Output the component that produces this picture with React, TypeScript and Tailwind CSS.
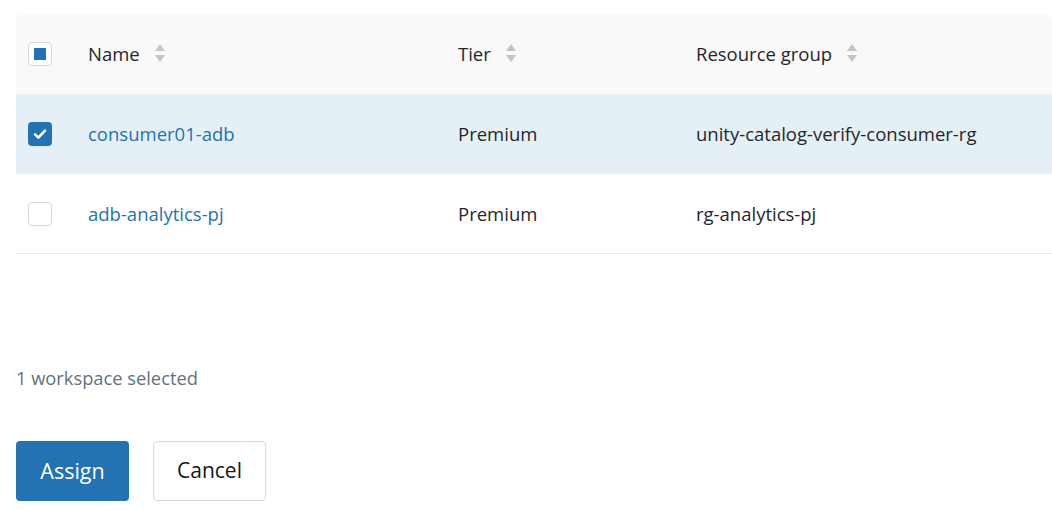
import React from 'react';

const rows = [
  { name: 'consumer01-adb', tier: 'Premium', group: 'unity-catalog-verify-consumer-rg', selected: true },
  { name: 'adb-analytics-pj', tier: 'Premium', group: 'rg-analytics-pj', selected: false }
];

function SortIcon() {
  return (
    <svg width="12" height="22" viewBox="0 0 12 22" className="ml-[14px] shrink-0">
      <path d="M6 1 L11 8 L1 8 Z" fill="#c4c4c4" />
      <path d="M1 12 L11 12 L6 19 Z" fill="#c4c4c4" />
    </svg>
  );
}

function Checkbox({ state }: { state: 'checked' | 'indeterminate' | 'empty' }) {
  if (state === 'checked') {
    return (
      <div className="w-6 h-6 rounded-[4px] bg-[#2272b4] flex items-center justify-center">
        <svg width="16" height="16" viewBox="0 0 16 16">
          <path d="M3 8.4 L6.4 11.6 L13 4.6" fill="none" stroke="white" strokeWidth="2.6" strokeLinecap="round" strokeLinejoin="round" />
        </svg>
      </div>
    );
  }
  return (
    <div className="w-6 h-6 rounded-[4px] border border-[#d1d9e1] bg-white flex items-center justify-center">
      {state === 'indeterminate' && <div className="w-3 h-3 bg-[#2272b4]" />}
    </div>
  );
}

export default function App() {
  return (
    <div className="bg-white pl-4 pt-[14px] min-h-[510px] text-[#11171c]" style={{ fontFamily: '"Open Sans", sans-serif' }}>
      <div className="w-full">
        <div className="grid grid-cols-[56px_370px_238px_1fr] h-[80px] bg-[#f9f9f9] rounded-t-md items-center text-[18.5px] font-medium text-[#1f272d]">
          <div className="pl-3">
            <Checkbox state="indeterminate" />
          </div>
          <div className="pl-4 flex items-center">Name<SortIcon /></div>
          <div className="pl-4 flex items-center">Tier<SortIcon /></div>
          <div className="pl-4 flex items-center">Resource group<SortIcon /></div>
        </div>
        {rows.map((r) => (
          <div
            key={r.name}
            className={`grid grid-cols-[56px_370px_238px_1fr] h-[80px] items-center text-[18.5px] border-b border-[#ebebeb] ${r.selected ? 'bg-[#e5f0f6]' : 'bg-white'}`}
          >
            <div className="pl-3">
              <Checkbox state={r.selected ? 'checked' : 'empty'} />
            </div>
            <div className="pl-4 text-[#2272b4]">{r.name}</div>
            <div className="pl-4 text-[#1f272d]">{r.tier}</div>
            <div className="pl-4 text-[#1f272d]">{r.group}</div>
          </div>
        ))}
      </div>
      <div className="mt-[112px] text-[18.3px] leading-6 text-[#5f7281]">1 workspace selected</div>
      <div className="mt-[51px] flex gap-6">
        <button className="h-[60px] w-[113px] rounded-[4px] bg-[#2272b4] text-white text-[21.5px]">Assign</button>
        <button className="h-[60px] w-[113px] rounded-[4px] border border-[#d1d9e1] bg-white text-[21px] text-[#11171c]">Cancel</button>
      </div>
    </div>
  );
}
